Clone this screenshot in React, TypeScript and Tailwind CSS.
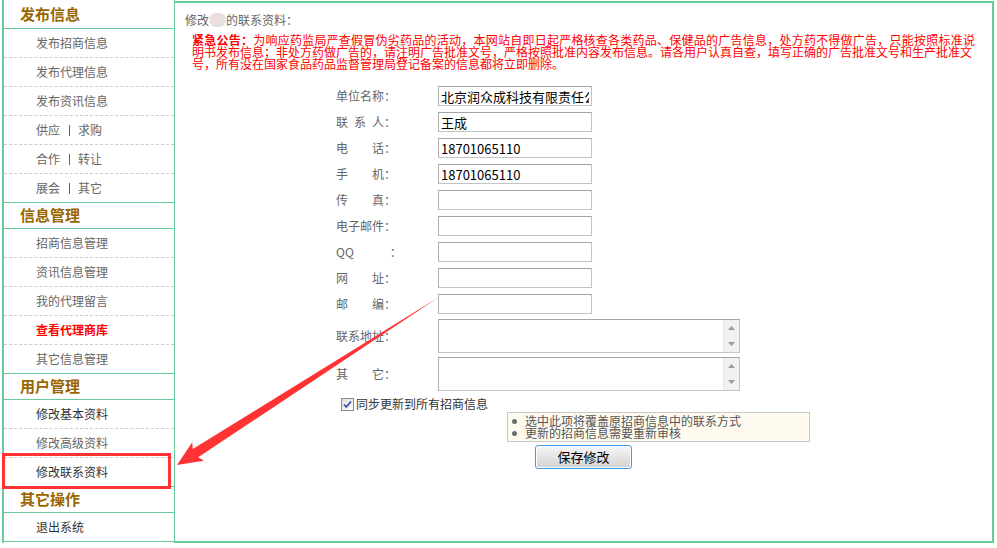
import React from "react";

const FONT = '"Noto Sans CJK SC", "Noto Sans", sans-serif';

type Item = { label: React.ReactNode; tone?: "gray" | "dark" | "red" };

function SideHeader({ text, first }: { text: string; first?: boolean }) {
  return (
    <div
      className={`${first ? "h-[29px]" : "h-[26px]"} border-b border-[#66cc99] flex items-center pl-[16px] text-[15px] font-bold text-[#996600]`}
    >
      {text}
    </div>
  );
}

function SideItem({ item, last }: { item: Item; last?: boolean }) {
  const color =
    item.tone === "red"
      ? "text-[#ff0000] font-bold"
      : item.tone === "dark"
      ? "text-[#333333]"
      : "text-[#666666]";
  return (
    <div
      className={`h-[29px] border-b ${last ? "border-solid border-[#66cc99]" : "border-dashed border-[#cccccc]"} flex items-center pl-[32px] text-[12px] ${color}`}
    >
      {item.label}
    </div>
  );
}

function Pair({ a, b }: { a: string; b: string }) {
  return (
    <span className="flex items-center">
      <span>{a}</span>
      <span className="ml-[9px] mr-[8px] inline-block w-[1px] h-[11px] bg-[#666]" />
      <span>{b}</span>
    </span>
  );
}

const groups: { title: string; items: Item[] }[] = [
  {
    title: "发布信息",
    items: [
      { label: "发布招商信息" },
      { label: "发布代理信息" },
      { label: "发布资讯信息" },
      { label: <Pair a="供应" b="求购" /> },
      { label: <Pair a="合作" b="转让" /> },
      { label: <Pair a="展会" b="其它" /> },
    ],
  },
  {
    title: "信息管理",
    items: [
      { label: "招商信息管理" },
      { label: "资讯信息管理" },
      { label: "我的代理留言" },
      { label: "查看代理商库", tone: "red" },
      { label: "其它信息管理" },
    ],
  },
  {
    title: "用户管理",
    items: [
      { label: "修改基本资料", tone: "dark" },
      { label: "修改高级资料" },
      { label: "修改联系资料", tone: "dark" },
    ],
  },
  {
    title: "其它操作",
    items: [{ label: "退出系统", tone: "dark" }],
  },
];

function TextInput({ value }: { value?: string }) {
  return (
    <input
      readOnly
      defaultValue={value ?? ""}
      className="w-[154px] h-[20px] border border-[#c3c3c3] border-t-[#a5a5a5] border-l-[#b0b0b0] px-[2px] text-[13px] text-black outline-none bg-white"
      style={{ fontFamily: FONT }}
    />
  );
}

function FakeTextarea() {
  return (
    <div className="w-[302px] h-[34px] border border-[#c3c3c3] border-t-[#a5a5a5] border-l-[#b0b0b0] flex bg-white">
      <div className="flex-1" />
      <div className="w-[16px] h-full bg-[#f1f1f1] border-l border-[#e4e4e4] flex flex-col items-center justify-between py-[6px]">
        <svg width="7" height="4" viewBox="0 0 7 4">
          <polygon points="3.5,0 7,4 0,4" fill="#9a9a9a" />
        </svg>
        <svg width="7" height="4" viewBox="0 0 7 4">
          <polygon points="0,0 7,0 3.5,4" fill="#9a9a9a" />
        </svg>
      </div>
    </div>
  );
}

function Label({ children }: { children: React.ReactNode }) {
  return (
    <div className="w-[102px] text-[12px] text-[#666666] whitespace-pre flex items-center">
      {children}
    </div>
  );
}

export default function App() {
  const rows: { label: React.ReactNode; value?: string }[] = [
    { label: "单位名称：", value: "北京润众成科技有限责任公司" },
    {
      label: (
        <>
          <span>联</span>
          <span className="ml-[6px]">系</span>
          <span className="ml-[6px]">人：</span>
        </>
      ),
      value: "王成",
    },
    { label: "电　　话：", value: "18701065110" },
    { label: "手　　机：", value: "18701065110" },
    { label: "传　　真：" },
    { label: "电子邮件：" },
    { label: "QQ　　　：" },
    { label: "网　　址：" },
    { label: "邮　　编：" },
  ];

  return (
    <div
      className="relative w-[997px] h-[548px] bg-white overflow-hidden"
      style={{ fontFamily: FONT }}
    >
      <div className="flex pl-[2px]">
        {/* Sidebar */}
        <div className="w-[173px] shrink-0 border-l-2 border-r border-[#66cc99] flex flex-col">
          {groups.map((g, gi) => (
            <div key={g.title}>
              <SideHeader text={g.title} first={gi === 0} />
              {g.items.map((it, i) => (
                <SideItem key={i} item={it} last={i === g.items.length - 1} />
              ))}
            </div>
          ))}
        </div>

        {/* Main panel */}
        <div className="w-[819px] h-[542px] mt-[1px] border-t-2 border-r-2 border-b-2 border-[#66cc99] flex flex-col">
          <div className="pt-[10px] pl-[10px] text-[12px] leading-[12px] text-[#666666] flex items-center">
            <span>修改</span>
            <span className="inline-block w-[17px] h-[14px] rounded-full bg-gradient-to-r from-[#f3dcdc] to-[#e2e2e2]" />
            <span>的联系资料：</span>
          </div>

          <div className="mt-[7px] ml-[17px] w-[783px] text-[12px] leading-[12px] text-[#ff0000]">
            <div className="text-justify whitespace-nowrap [text-align-last:justify]">
              <b>紧急公告：</b>为响应药监局严查假冒伪劣药品的活动，本网站自即日起严格核查各类药品、保健品的广告信息，处方药不得做广告，只能按照标准说
            </div>
            <div className="whitespace-nowrap">
              明书发布信息；非处方药做广告的，请注明广告批准文号，严格按照批准内容发布信息。请各用户认真自查，填写正确的广告批准文号和生产批准文
            </div>
            <div className="whitespace-nowrap">
              号，所有没在国家食品药品监督管理局登记备案的信息都将立即删除。
            </div>
          </div>

          <div className="mt-[13px] ml-[161px] flex flex-col">
            {rows.map((r, i) => (
              <div key={i} className="h-[26px] flex items-center">
                <Label>{r.label}</Label>
                <TextInput value={r.value} />
              </div>
            ))}
            <div className="h-[38px] flex items-center">
              <Label>联系地址：</Label>
              <FakeTextarea />
            </div>
            <div className="h-[38px] flex items-center">
              <Label>其　　它：</Label>
              <FakeTextarea />
            </div>
            <div className="h-[19px] pt-[3px] pl-[5px] flex items-center">
              <svg width="13" height="13" viewBox="0 0 13 13">
                <defs>
                  <linearGradient id="cbg" x1="0" y1="0" x2="1" y2="1">
                    <stop offset="0" stopColor="#dcdcd8" />
                    <stop offset="1" stopColor="#ffffff" />
                  </linearGradient>
                </defs>
                <rect x="0.5" y="0.5" width="12" height="12" fill="url(#cbg)" stroke="#8a8a8a" />
                <path d="M3 6.5 L5.3 9 L10 3.5" fill="none" stroke="#2f4fa8" strokeWidth="1.8" />
              </svg>
              <span className="ml-[2px] text-[12px] text-[#333333]">同步更新到所有招商信息</span>
            </div>
            <div className="ml-[171px] w-[303px] h-[30px] border border-[#c8c8c8] bg-[#fffaf0] pl-[4px] pt-[2px] text-[12px] leading-[12px] text-[#555555]">
              <div className="flex items-center">
                <span className="w-[5px] h-[5px] rounded-full bg-[#6b6b6b]" />
                <span className="ml-[8px]">选中此项将覆盖原招商信息中的联系方式</span>
              </div>
              <div className="flex items-center">
                <span className="w-[5px] h-[5px] rounded-full bg-[#6b6b6b]" />
                <span className="ml-[8px]">更新的招商信息需要重新审核</span>
              </div>
            </div>
            <button
              className="mt-[3px] ml-[199px] w-[97px] h-[24px] rounded-[3px] border border-[#3f9ae8] bg-gradient-to-b from-[#f7f7f7] to-[#d2d2d2] text-[13px] text-black flex items-center justify-center shadow-[inset_0_0_0_1px_#ffffff]"
              style={{ fontFamily: FONT }}
            >
              保存修改
            </button>
          </div>
        </div>
      </div>

      {/* Red highlight box */}
      <div className="absolute left-[2px] top-[453px] w-[169px] h-[36px] border-[3px] border-[#ff3333] pointer-events-none" />

      {/* Red arrow */}
      <svg
        className="absolute left-0 top-0 pointer-events-none"
        width="997"
        height="548"
        viewBox="0 0 997 548"
      >
        <polygon
          points="177,465 192.2,442.2 192.8,448.9 439,297 198.2,457.3 204,460.8"
          fill="#ff3333"
        />
      </svg>
    </div>
  );
}
